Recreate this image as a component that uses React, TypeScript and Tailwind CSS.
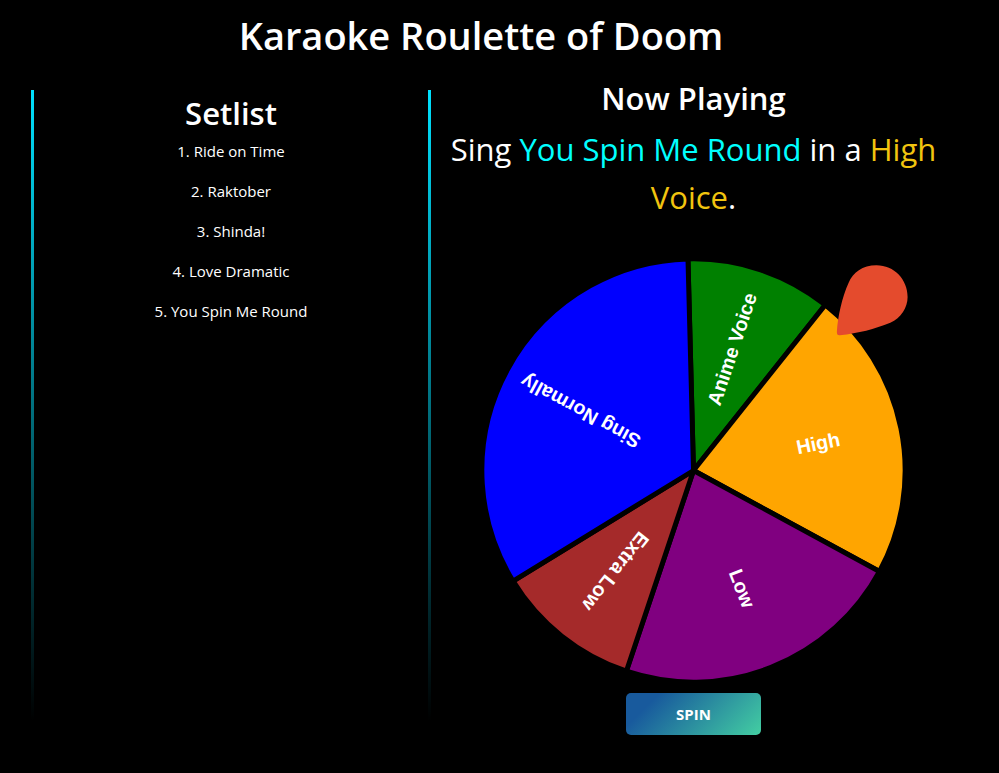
import React from "react";

type Slice = { label: string; share: number; color: string };

const songs = ["Ride on Time", "Raktober", "Shinda!", "Love Dramatic", "You Spin Me Round"];

const slices: Slice[] = [
  { label: "Anime Voice", share: 40, color: "green" },
  { label: "High", share: 80, color: "orange" },
  { label: "Low", share: 80, color: "purple" },
  { label: "Extra Low", share: 40, color: "brown" },
  { label: "Sing Normally", share: 120, color: "blue" },
];

const CENTER = 225;
const RADIUS = 214;
const LABEL_RADIUS = 129;
const START_ANGLE = -91.5;

function pointAt(angle: number, radius: number) {
  const rad = (angle * Math.PI) / 180;
  return { x: CENTER + radius * Math.cos(rad), y: CENTER + radius * Math.sin(rad) };
}

function Wheel() {
  let angle = START_ANGLE;
  return (
    <svg viewBox="0 0 450 450" className="w-[445px] max-w-full" role="img" aria-label="Voice wheel">
      {slices.map((slice) => {
        const from = pointAt(angle, RADIUS);
        const to = pointAt(angle + slice.share, RADIUS);
        const middle = angle + slice.share / 2;
        const label = pointAt(middle, LABEL_RADIUS);
        angle += slice.share;
        return (
          <g key={slice.label}>
            <path
              d={`M${CENTER} ${CENTER} L${from.x} ${from.y} A${RADIUS} ${RADIUS} 0 0 1 ${to.x} ${to.y} Z`}
              fill={slice.color}
              stroke="black"
              strokeWidth={5}
            />
            <text
              transform={`translate(${label.x} ${label.y}) rotate(${middle})`}
              textAnchor="middle"
              dy={5}
              className="fill-white font-['Liberation_Sans',Arial,sans-serif] text-[20px] font-bold"
            >
              {slice.label}
            </text>
          </g>
        );
      })}
      <path
        d="M370 84.5 C371 70 375 50 382 35 C386 25 396 17.5 410 17.5 C428 17.5 441.5 32 441.5 49.5 C441.5 60 435 71 424 75.5 C408 82 392 86 373 88.3 C371 88.5 369.7 87.5 370 84.5 Z"
        fill="#e44b2d"
      />
    </svg>
  );
}

export default function App() {
  return (
    <div className="min-h-screen bg-black pr-[37px] text-center font-['Segoe_UI','Open_Sans',sans-serif] text-white">
      <h1 className="pt-[11px] text-[38px] leading-12 font-semibold">Karaoke Roulette of Doom</h1>
      <main className="grid grid-cols-[16fr_21fr] items-start pt-[31px] pr-1.5 pl-[31px]">
        <section className="min-h-[630px] border-x-3 pt-[3px] [border-image:linear-gradient(#00e1ff,transparent)_1]">
          <h2 className="text-[31px] leading-10 font-semibold">Setlist</h2>
          <ol className="flex flex-col gap-4 pt-1.5">
            {songs.map((song, i) => (
              <li key={song} className="text-[15px] leading-6">
                {i + 1}. {song}
              </li>
            ))}
          </ol>
        </section>
        <section className="-mt-3 flex flex-col items-center">
          <h2 className="text-[31px] leading-10 font-semibold">Now Playing</h2>
          <p className="px-3 pt-[7px] text-[31px] leading-12">
            Sing <span className="text-[#00ffff]">You Spin Me Round</span> in a{" "}
            <span className="text-[#f1c40f]">High</span> <span className="text-[#f1c40f]">Voice</span>.
          </p>
          <div className="pt-[27px]">
            <Wheel />
          </div>
          <button
            type="button"
            className="h-[42px] w-[135px] rounded-[5px] bg-[linear-gradient(135deg,#185a9d_19%,#43cea2)] text-[15px] font-bold"
          >
            SPIN
          </button>
        </section>
      </main>
    </div>
  );
}
